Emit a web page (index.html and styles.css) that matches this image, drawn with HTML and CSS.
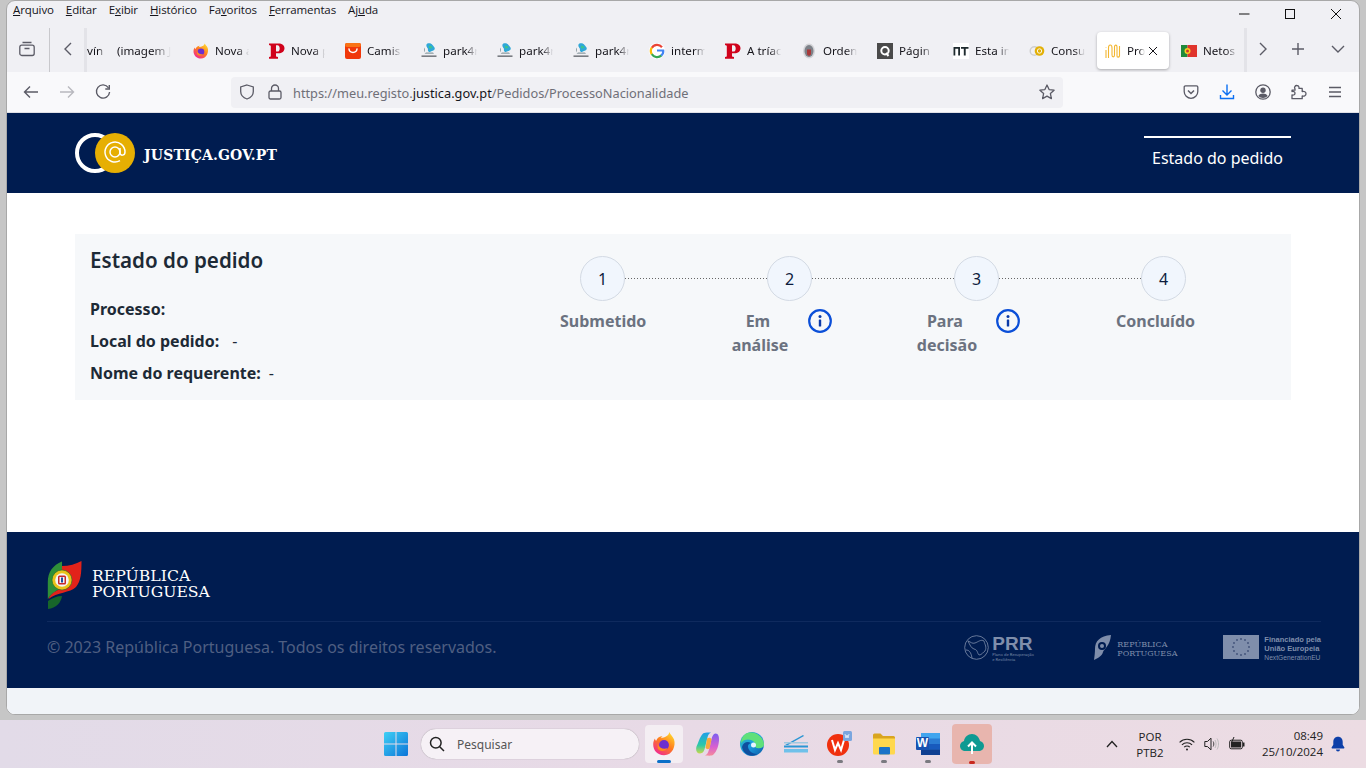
FILE: index.html
```html
<!DOCTYPE html>
<html lang="pt">
<head>
<meta charset="utf-8">
<title>Estado do pedido</title>
<link rel="stylesheet" href="styles.css">
</head>
<body>
<svg class="defs" width="0" height="0" aria-hidden="true">
  <defs>
    <symbol id="i-park" viewBox="0 0 16 16">
      <path d="M6 .8c2-1 4.500-.4 5.500 1.200 1 1.500 3 2.500 2 4.500-.8 1.500-2.500 1-3.500 2-1 .8-2.500.5-3-.8-.4-1 .4-1.700-.6-2.700C5.400 3.800 4.800 1.800 6 .8z" fill="#2fa8d8"/>
      <path d="M8 2.800c1.500-.5 3 .5 3.500 1.500-.8 1.200-2.500 1.500-3.500.7z" fill="#3cc48c"/>
      <path d="M4 4.500c-1.500 1.500-1 3.500 0 5M5 9.500h7l1 1.200H3.500z" fill="#8a9aa0"/>
      <rect x=".5" y="12.500" width="15" height="1.300" fill="#5c6066"/>
    </symbol>
    <symbol id="i-p" viewBox="0 0 16 16">
      <path d="M0 .5h9.500C13 .5 15.500 2.200 15.500 5.200S13 10.200 9.500 10.200H7v3.300l2 .6v1.600H0v-1.600l1.800-.6V2.700L0 2.100zM7 2.200v6.300h1.500c1.400 0 2.200-1.200 2.200-3.100s-.8-3.200-2.200-3.200z" fill="#d0021b"/>
    </symbol>
    <symbol id="i-info" viewBox="0 0 24 24">
      <circle cx="12" cy="12" r="10.800" fill="none" stroke="#0b4fd8" stroke-width="2.200"/>
      <circle cx="12" cy="7.600" r="1.500" fill="#0b3aa8"/>
      <rect x="10.800" y="10.500" width="2.400" height="7" rx=".6" fill="#0b3aa8"/>
    </symbol>
  </defs>
</svg>

<div class="window">
  <div class="menubar">
    <nav class="menu">
      <span class="menu-item"><u>A</u>rquivo</span>
      <span class="menu-item"><u>E</u>ditar</span>
      <span class="menu-item">E<u>x</u>ibir</span>
      <span class="menu-item"><u>H</u>istórico</span>
      <span class="menu-item">Fa<u>v</u>oritos</span>
      <span class="menu-item"><u>F</u>erramentas</span>
      <span class="menu-item">Aj<u>u</u>da</span>
    </nav>
    <div class="winctl">
      <svg width="12" height="12" viewBox="0 0 12 12"><path d="M1 6h10.500" stroke="#111" stroke-width="1"/></svg>
      <svg width="12" height="12" viewBox="0 0 12 12"><rect x="1.500" y="1.500" width="9" height="9" fill="none" stroke="#111"/></svg>
      <svg width="12" height="12" viewBox="0 0 12 12"><path d="M1 1l10 10M11 1L1 11" stroke="#111" stroke-width="1"/></svg>
    </div>
  </div>

  <div class="tabbar">
    <button class="tool tool-view" aria-label="Abas">
      <svg width="16" height="16" viewBox="0 0 16 16" fill="none" stroke="#5b5b66" stroke-width="1.300"><path d="M3.500 1.500h9"/><rect x=".8" y="4.200" width="14.400" height="10.300" rx="2"/><path d="M5.500 7.500h5"/></svg>
    </button>
    <div class="sep"></div>
    <button class="tool tool-left" aria-label="Anterior">
      <svg width="12" height="14" viewBox="0 0 12 14" fill="none" stroke="#5b5b66" stroke-width="1.400"><path d="M9 1L3 7l6 6"/></svg>
    </button>
    <div class="tabs">
      <div class="tab tab-cut"><span class="tab-text">vín</span></div>
      <div class="tab"><span class="tab-text">(imagem J</span></div>
      <div class="tab">
        <svg class="fav" viewBox="0 0 16 16">
          <defs><linearGradient id="ff" x1="0.800" y1="0.100" x2="0.200" y2="1"><stop offset="0" stop-color="#ffcc2a"/><stop offset=".45" stop-color="#ff7a1f"/><stop offset="1" stop-color="#f0219b"/></linearGradient></defs>
          <path d="M11.500.5c.5 1 2.500 2.500 3.200 4.500C16 8.800 13.800 15.500 8 15.500 3.500 15.500.5 12.300.5 8.200c0-1.600.6-3 1.200-3.800 0 .8.400 1.300.8 1.500C3.500 3.500 5.500 2.700 7 2.800c-.5.400-.9.800-1 1.300 2.200-.5 5.500-1 5.500-3.600z" fill="url(#ff)"/>
          <circle cx="8" cy="8.700" r="3.300" fill="#6b2fd0"/>
          <path d="M4 8c1 2.800 4 4 6.300 2.700-1.300 2.400-5 2.600-6.300.3z" fill="#ff8a1f"/>
        </svg>
        <span class="tab-text">Nova a</span>
      </div>
      <div class="tab"><svg class="fav"><use href="#i-p"/></svg><span class="tab-text">Nova p</span></div>
      <div class="tab">
        <svg class="fav" viewBox="0 0 16 16"><rect width="16" height="16" rx="2" fill="#f0380b"/><rect y="0" width="16" height="4" rx="2" fill="#f97316"/><path d="M4 6c.5 4.500 7.500 4.500 8 0" fill="none" stroke="#fff" stroke-width="1.500" stroke-linecap="round"/></svg>
        <span class="tab-text">Camis</span>
      </div>
      <div class="tab"><svg class="fav"><use href="#i-park"/></svg><span class="tab-text">park4r</span></div>
      <div class="tab"><svg class="fav"><use href="#i-park"/></svg><span class="tab-text">park4r</span></div>
      <div class="tab"><svg class="fav"><use href="#i-park"/></svg><span class="tab-text">park4r</span></div>
      <div class="tab">
        <svg class="fav" viewBox="0 0 16 16"><circle cx="8" cy="8" r="8" fill="#fff"/><g fill="none" stroke-width="2.200"><path d="M13 4.200A6.300 6.300 0 0 0 2.800 4.800" stroke="#ea4335"/><path d="M2.800 4.700a6.300 6.300 0 0 0 0 6.600" stroke="#fbbc05"/><path d="M2.800 11.200a6.300 6.300 0 0 0 9.700 1.200" stroke="#34a853"/><path d="M12.200 12.700c1.500-1.300 2.300-3 2-5.200H8" stroke="#4285f4"/></g></svg>
        <span class="tab-text">interm</span>
      </div>
      <div class="tab"><svg class="fav"><use href="#i-p"/></svg><span class="tab-text">A tríac</span></div>
      <div class="tab">
        <svg class="fav" viewBox="0 0 16 16"><ellipse cx="8" cy="8" rx="6" ry="7.500" fill="#d4d4d8"/><ellipse cx="8" cy="8" rx="4.500" ry="6" fill="#7d8188"/><path d="M6 6.500h4v5L8 13l-2-1.500z" fill="#a8393a"/></svg>
        <span class="tab-text">Orden</span>
      </div>
      <div class="tab">
        <svg class="fav" viewBox="0 0 16 16"><rect width="16" height="16" fill="#4a4a4a"/><circle cx="8" cy="7.700" r="3.700" fill="none" stroke="#fff" stroke-width="2"/><path d="M9 10l2.500 3" stroke="#fff" stroke-width="2"/></svg>
        <span class="tab-text">Págin</span>
      </div>
      <div class="tab">
        <svg class="fav" viewBox="0 0 16 16"><rect width="16" height="16" fill="#fff"/><path d="M.5 4h6.500v8.500H5.200V5.700H2.300v6.800H.5zM8 4h7.500v1.700h-2.800v6.800h-1.900V5.700H8z" fill="#1e2a2e"/></svg>
        <span class="tab-text">Esta in</span>
      </div>
      <div class="tab">
        <svg class="fav" viewBox="0 0 16 16"><circle cx="5.500" cy="8" r="4.300" fill="none" stroke="#cfcfcf" stroke-width="1.400"/><circle cx="10.500" cy="8" r="4.800" fill="#e2b007"/><circle cx="10.500" cy="8" r="2.200" fill="none" stroke="#fff" stroke-width=".9"/></svg>
        <span class="tab-text">Consu</span>
      </div>
      <div class="tab tab-active">
        <svg class="fav" viewBox="0 0 16 16" fill="none" stroke="#f2b632" stroke-width="1.100"><path d="M1 15V7M1 4.500v-.6M3.500 15V5c0-4 3.500-4 3.500 0v7c0 2.500 2.500 2.500 2.500 0V4c0-2.500 2.500-2.500 2.500 0v9c0 1.500 2 1.500 2.500 0V3"/></svg>
        <span class="tab-text tab-text-short">Pro</span>
        <svg class="tab-close" width="12" height="12" viewBox="0 0 12 12"><path d="M2 2l8 8M10 2l-8 8" stroke="#15141a" stroke-width="1"/></svg>
      </div>
      <div class="tab">
        <svg class="fav" viewBox="0 0 16 16"><rect y="2" width="6.500" height="12" fill="#1f8a3b"/><rect x="6.500" y="2" width="9.500" height="12" fill="#e0342c"/><circle cx="6.500" cy="8" r="3" fill="#f5d020"/><circle cx="6.500" cy="8" r="1.500" fill="#c8372d"/></svg>
        <span class="tab-text">Netos</span>
      </div>
    </div>
    <div class="tab-end">
      <div class="sep-soft"></div>
      <svg class="t-right" width="12" height="14" viewBox="0 0 12 14" fill="none" stroke="#5b5b66" stroke-width="1.400"><path d="M3 1l6 6-6 6"/></svg>
      <svg class="t-plus" width="14" height="14" viewBox="0 0 14 14" stroke="#5b5b66" stroke-width="1.400"><path d="M7 1v12M1 7h12"/></svg>
      <svg class="t-down" width="14" height="10" viewBox="0 0 14 10" fill="none" stroke="#5b5b66" stroke-width="1.400"><path d="M1 2l6 6 6-6"/></svg>
    </div>
  </div>

  <div class="navbar">
    <div class="nav-left">
      <svg width="16" height="16" viewBox="0 0 16 16" fill="none" stroke="#5b5b66" stroke-width="1.400"><path d="M15 8H1.500M7 2.500L1.500 8 7 13.500"/></svg>
      <svg width="16" height="16" viewBox="0 0 16 16" fill="none" stroke="#b8b8be" stroke-width="1.400"><path d="M1 8h13.500M9 2.500L14.500 8 9 13.500"/></svg>
      <svg width="16" height="16" viewBox="0 0 16 16" fill="none" stroke="#5b5b66" stroke-width="1.400"><path d="M13.500 3.800A6.600 6.600 0 1 0 14.600 8"/><path d="M14.300 1v4h-4" /></svg>
    </div>
    <div class="urlbar">
      <svg class="u-shield" width="16" height="16" viewBox="0 0 16 16" fill="none" stroke="#5b5b66" stroke-width="1.300"><path d="M8 1l6.300 2v4.500c0 3.800-3 6.400-6.300 7.500C4.700 13.900 1.700 11.300 1.700 7.500V3z"/></svg>
      <svg class="u-lock" width="14" height="16" viewBox="0 0 14 16" fill="none" stroke="#5b5b66" stroke-width="1.300"><rect x="1" y="7" width="12" height="8" rx="1.500"/><path d="M3.500 7V4.500a3.500 3.500 0 0 1 7 0V7"/></svg>
      <span class="url"><span class="url-dim">https://meu.registo.</span>justica.gov.pt<span class="url-dim">/Pedidos/ProcessoNacionalidade</span></span>
      <svg class="u-star" width="16" height="16" viewBox="0 0 16 16" fill="none" stroke="#5b5b66" stroke-width="1.300"><path d="M8 1l2.100 4.600 5 .6-3.700 3.400 1 5L8 12.100l-4.400 2.500 1-5L.9 6.200l5-.6z" stroke-linejoin="round"/></svg>
    </div>
    <div class="nav-right">
      <svg width="16" height="16" viewBox="0 0 16 16" fill="none" stroke="#5b5b66" stroke-width="1.300"><path d="M2.500 1.800h11c.8 0 1.300.6 1.300 1.300v4.400a6.800 6.800 0 0 1-13.600 0V3.100c0-.7.500-1.300 1.300-1.300z"/><path d="M5 6.500l3 3 3-3" stroke-width="1.500"/></svg>
      <svg width="16" height="16" viewBox="0 0 16 16" fill="none" stroke="#0b6ff2" stroke-width="1.400"><path d="M8 .5v10M3.500 6.500L8 11l4.500-4.500M1.500 11v3.500h13V11"/></svg>
      <svg width="16" height="16" viewBox="0 0 16 16"><circle cx="8" cy="8" r="7.200" fill="none" stroke="#5b5b66" stroke-width="1.300"/><circle cx="8" cy="6.300" r="2.700" fill="#5b5b66"/><path d="M3.300 12c1-2 3-2.600 4.700-2.600s3.700.6 4.700 2.600c-1.200 1.300-3 2-4.700 2s-3.500-.7-4.700-2z" fill="#5b5b66"/></svg>
      <svg width="16" height="16" viewBox="0 0 16 16" fill="none" stroke="#5b5b66" stroke-width="1.300"><path d="M1 6.500h3V5.300a2.200 2.200 0 0 1 2-3.500 2.100 2.100 0 0 1 2 2.200v.7h3.200v3.200c2-.8 3.800.5 3.800 2.100s-1.800 3-3.800 2.200V15H1v-3.700c1.800.5 3-.5 3-1.800S2.800 7.500 1 7.800z" stroke-linejoin="round" transform="translate(0 -.3)"/></svg>
      <svg width="16" height="16" viewBox="0 0 16 16" stroke="#5b5b66" stroke-width="1.300"><path d="M2 3.500h12M2 8h12M2 12.500h12"/></svg>
    </div>
  </div>

  <div class="page">
    <header class="site-head">
      <div class="brand">
        <svg class="brand-mark" width="60" height="40" viewBox="0 0 60 40">
          <circle cx="20" cy="20" r="18" fill="none" stroke="#fff" stroke-width="4"/>
          <circle cx="40" cy="20" r="20" fill="#e6af03"/>
          <circle cx="40" cy="19" r="5" fill="none" stroke="#fff" stroke-width="1.500"/>
          <path d="M45 15v5c0 3 5 3 5-1a10 10 0 1 0-5 8.700" fill="none" stroke="#fff" stroke-width="1.500"/>
        </svg>
        <span class="brand-name">JUSTIÇA.GOV.PT</span>
      </div>
      <a class="head-link">Estado do pedido</a>
    </header>

    <main class="main">
      <section class="card">
        <div class="info">
          <h1 class="info-title">Estado do pedido</h1>
          <p class="info-row"><b>Processo:</b></p>
          <p class="info-row"><b>Local do pedido:</b><span class="val val-wide">-</span></p>
          <p class="info-row"><b>Nome do requerente:</b><span class="val">-</span></p>
        </div>
        <div class="steps">
          <div class="step-track">
            <span class="dot">1</span><span class="line"></span>
            <span class="dot">2</span><span class="line"></span>
            <span class="dot">3</span><span class="line"></span>
            <span class="dot">4</span>
          </div>
          <div class="step-labels">
            <div class="lab lab-1"><span class="lab-text">Submetido</span></div>
            <div class="lab lab-2"><span class="lab-text lab-narrow">Em&nbsp; análise</span><svg class="info-ic"><use href="#i-info"/></svg></div>
            <div class="lab lab-3"><span class="lab-text lab-narrow">Para&nbsp; decisão</span><svg class="info-ic"><use href="#i-info"/></svg></div>
            <div class="lab lab-4"><span class="lab-text">Concluído</span></div>
          </div>
        </div>
      </section>
    </main>

    <footer class="site-foot">
      <div class="foot-brand">
        <svg width="36" height="50" viewBox="0 0 36 50">
          <path d="M15 1.500C6 5 .8 12 .8 22v17C4 34 10 30 15 28z" fill="#2f8f38"/>
          <path d="M15 6c7 0 14-2 19.500-5 0 11-.5 20-5.500 26-6 6-19 5-27.500 12 3-8 12-9 13.500-12z" fill="#e2231a"/>
          <path d="M1 49V41c4-3 9-5 14-5-1 7-6 12-14 13z" fill="#17652a"/>
          <circle cx="15" cy="20" r="10" fill="#e9c21a" stroke="#1f6e2c" stroke-width=".6"/>
          <circle cx="15" cy="20" r="6.800" fill="#f4f4f4"/>
          <rect x="11" y="15.500" width="8" height="9" rx="1.500" fill="#c8262a"/>
          <rect x="12.500" y="17" width="5" height="6" fill="#f4f4f4"/>
          <rect x="14" y="17.500" width="2" height="5" fill="#1d4fa3"/>
        </svg>
        <span class="foot-name">REPÚBLICA<br>PORTUGUESA</span>
      </div>
      <div class="foot-bottom">
        <span class="copy">© 2023 República Portuguesa. Todos os direitos reservados.</span>
        <div class="partners">
          <div class="prr">
            <svg width="25" height="25" viewBox="0 0 25 25" fill="none" stroke="#7f8eab" stroke-width=".8"><circle cx="12.500" cy="12.500" r="11.800"/><path d="M4 6c3 1 4 3 7 2s6-4 9-2c1 4 3 6 1 10-2 1-3 4-6 4-2-2-1-5-5-6-3-1-4-4-6-8zM2 15c3 0 5 2 6 8"/></svg>
            <div class="prr-text"><b>PRR</b><small>Plano de Recuperação<br>e Resiliência</small></div>
          </div>
          <div class="rp">
            <svg width="18" height="25" viewBox="0 0 18 25"><path d="M17 0C6 1 1 6 1 14c0 4-.5 7-1 11 4-2 8-4 9-8 1-3 7-6 8-17z" fill="#7f8eab"/><circle cx="8" cy="11" r="4" fill="#001c50"/><circle cx="8" cy="11" r="2" fill="#7f8eab"/></svg>
            <span class="rp-text">REPÚBLICA<br>PORTUGUESA</span>
          </div>
          <div class="eu">
            <div class="eu-flag">
              <svg width="36" height="24" viewBox="0 0 36 24" fill="#3e5078">
                <circle cx="18" cy="4" r=".9"/><circle cx="22" cy="5" r=".9"/><circle cx="25" cy="8" r=".9"/><circle cx="26" cy="12" r=".9"/><circle cx="25" cy="16" r=".9"/><circle cx="22" cy="19" r=".9"/><circle cx="18" cy="20" r=".9"/><circle cx="14" cy="19" r=".9"/><circle cx="11" cy="16" r=".9"/><circle cx="10" cy="12" r=".9"/><circle cx="11" cy="8" r=".9"/><circle cx="14" cy="5" r=".9"/>
              </svg>
            </div>
            <span class="eu-text"><b>Financiado pela<br>União Europeia</b><br><small>NextGenerationEU</small></span>
          </div>
        </div>
      </div>
    </footer>
    <div class="page-end"></div>
  </div>
</div>

<div class="taskbar">
  <svg class="tb-start" width="24" height="24" viewBox="0 0 24 24">
    <defs><linearGradient id="win" x1="0" y1="0" x2="1" y2="1"><stop offset="0" stop-color="#3fd0f5"/><stop offset="1" stop-color="#0b74d8"/></linearGradient></defs>
    <path d="M0 1.500A1.500 1.500 0 0 1 1.500 0H11.500V11.500H0zM12.500 0H22.500A1.500 1.500 0 0 1 24 1.500V11.500H12.500zM0 12.500H11.500V24H1.500A1.500 1.500 0 0 1 0 22.500zM12.500 12.500H24V22.500A1.500 1.500 0 0 1 22.500 24H12.500z" fill="url(#win)"/>
  </svg>
  <div class="tb-search">
    <svg width="16" height="16" viewBox="0 0 16 16" fill="none" stroke="#222" stroke-width="1.500"><circle cx="6.800" cy="6.800" r="5.300"/><path d="M10.700 10.700L15 15"/></svg>
    <span>Pesquisar</span>
  </div>
  <div class="tb-apps">
    <div class="tb-app tb-app-on">
      <svg width="24" height="26" viewBox="0 0 16 17">
        <path d="M11.500.5c.5 1.500 2.500 3 3.200 5C16 9.500 13.800 16 8 16 3.500 16 .8 12.800.8 8.700c0-1.600.6-3 1.200-3.800 0 .8.400 1.300.8 1.500C3.500 4 5.500 3.200 7 3.300c-.5.400-.9.800-1 1.300 2.200-.5 5.500-1.500 5.500-4.100z" fill="url(#ff)"/>
        <circle cx="8" cy="9.200" r="3.300" fill="#6b2fd0"/>
        <path d="M3.800 8.500c1 2.800 4.200 4 6.500 2.700-1.300 2.400-5.200 2.600-6.500.3z" fill="#ff8a1f"/>
      </svg>
      <i class="pin pin-on"></i>
    </div>
    <div class="tb-app">
      <svg width="24" height="24" viewBox="0 0 24 24">
        <defs>
          <linearGradient id="cp1" x1="0" y1="0" x2="0" y2="1"><stop offset="0" stop-color="#1f9fe8"/><stop offset=".6" stop-color="#2cc8a8"/><stop offset="1" stop-color="#c6d94a"/></linearGradient>
          <linearGradient id="cp2" x1="0" y1="0" x2="0" y2="1"><stop offset="0" stop-color="#7b5ff0"/><stop offset=".6" stop-color="#d85fd0"/><stop offset="1" stop-color="#f58a9a"/></linearGradient>
        </defs>
        <path d="M7 1.500c1.500-1.200 5-1 8-1-2.500 1-3 3-3.800 6l-2.200 9c-.6 3-2 6-5 6-3.500 0-4.500-3.500-3.500-7C2 12 3.500 5 7 1.500z" fill="url(#cp1)"/>
        <path d="M17 23c-1.500 1-5 .5-8 .5 2.500-1 3.200-3 4-6l2.200-9c.6-3 1.800-7 4.300-7 3 0 3.800 3.500 3.500 7-.3 4.500-2 11-6 14.500z" fill="url(#cp2)"/>
        <path d="M11 6.500c2-1 4-1 4.500 1l-1.800 8.500c-.6 1.500-3.200 1.500-4.200 0z" fill="#f7a93b"/>
      </svg>
    </div>
    <div class="tb-app">
      <svg width="24" height="24" viewBox="0 0 24 24">
        <defs><linearGradient id="edge" x1="0" y1="0" x2="1" y2="1"><stop offset="0" stop-color="#35c1b1"/><stop offset=".5" stop-color="#1b9de2"/><stop offset="1" stop-color="#0c59a4"/></linearGradient></defs>
        <circle cx="12" cy="12" r="12" fill="url(#edge)"/>
        <path d="M6 1.500C13 -2 23 3 24 12c.2 3-3 5-7 4 -3-.8-1-3-2.500-5.500C12 7 4.500 6 1 11c.2-4 2-7.500 5-9.500z" fill="#5fe07a"/>
        <path d="M8 14c0 4 3.500 8 9 8-6 4-14 0-15-7 1-5 6-6 9-4-1.500.5-3 1.500-3 3z" fill="#0f4f9e"/>
        <circle cx="13.500" cy="13" r="2.500" fill="#e8f4ff"/>
      </svg>
    </div>
    <div class="tb-app">
      <svg width="24" height="18" viewBox="0 0 24 18">
        <path d="M1 10L19 0l1 1L4 10z" fill="#2b96d4"/>
        <rect y="10.500" width="24" height="2" fill="#2b96d4"/>
        <rect y="14" width="24" height="3.500" fill="#6fc1ea"/>
        <rect y="7" width="24" height="1.500" fill="#9fc8df"/>
      </svg>
    </div>
    <div class="tb-app">
      <svg width="26" height="26" viewBox="0 0 26 26">
        <circle cx="11" cy="14" r="11" fill="#f0300e"/>
        <path d="M5 9l3 10 3-7 3 7 3-10" fill="none" stroke="#fff" stroke-width="2"/>
        <rect x="16" y="0" width="9" height="10" rx="1.500" fill="#7aa6df"/>
        <path d="M18 3l1 4 1-3 1 3 1-4" fill="none" stroke="#fff" stroke-width=".7"/>
      </svg>
      <i class="pin"></i>
    </div>
    <div class="tb-app">
      <svg width="24" height="24" viewBox="0 0 24 24">
        <path d="M1 3a1.500 1.500 0 0 1 1.500-1.500h6L11 4h10.500A1.500 1.500 0 0 1 23 5.500V8H1z" fill="#d9a520"/>
        <path d="M1 6.500h22V21a1.500 1.500 0 0 1-1.500 1.500h-19A1.500 1.500 0 0 1 1 21z" fill="#ffd84d"/>
        <rect x="7" y="15" width="11" height="7.500" rx="1" fill="#1a73c8"/>
      </svg>
      <i class="pin"></i>
    </div>
    <div class="tb-app">
      <svg width="24" height="24" viewBox="0 0 24 24">
        <rect x="5" y="1" width="19" height="22" rx="1.500" fill="#2b7cd3"/>
        <rect x="5" y="1" width="19" height="5.500" fill="#41a5ee"/>
        <rect x="5" y="12" width="19" height="5.500" fill="#185abd"/>
        <rect x="5" y="17.500" width="19" height="5.500" fill="#103f91"/>
        <rect y="5" width="13" height="13" rx="1" fill="#1852b0"/>
        <text class="word-w" x="6.500" y="15" text-anchor="middle">W</text>
      </svg>
      <i class="pin"></i>
    </div>
    <div class="tb-app tb-app-alert">
      <svg width="24" height="20" viewBox="0 0 24 20">
        <path d="M6 17h-.5C2.500 17 0 15 0 12c0-2.500 1.800-4.500 4-5 .5-4 4-7 8-7s7 3 8 7c2.300.5 4 2.500 4 5 0 3-2.500 5-5.500 5z" fill="#0f9a92"/>
        <path d="M12 20V9M8 12.500L12 8.500l4 4" fill="none" stroke="#fff" stroke-width="2"/>
      </svg>
      <i class="pin pin-red"></i>
    </div>
  </div>
  <div class="tray">
    <svg class="tr-chev" width="12" height="8" viewBox="0 0 12 8" fill="none" stroke="#222" stroke-width="1.300"><path d="M1 7l5-5.500L11 7"/></svg>
    <div class="tr-lang">POR<br>PTB2</div>
    <svg class="tr-wifi" width="16" height="13" viewBox="0 0 16 13" fill="none" stroke="#222" stroke-width="1.100"><path d="M.6 4.300a10.500 10.500 0 0 1 14.800 0M2.900 6.800a7.300 7.300 0 0 1 10.200 0M5.200 9.200a4 4 0 0 1 5.600 0"/><circle cx="8" cy="11.500" r="1" fill="#222" stroke="none"/></svg>
    <svg class="tr-vol" width="16" height="14" viewBox="0 0 16 14" fill="none" stroke="#222" stroke-width="1"><path d="M.8 4.500h2.600L7 1.200v11.600L3.400 9.500H.8z"/><path d="M9.200 4.500c.8 1.500.8 3.500 0 5" stroke="#444"/><path d="M11 3c1.400 2.300 1.400 5.700 0 8M13 1.500c2 3.200 2 7.800 0 11" stroke="#bbb"/></svg>
    <svg class="tr-bat" width="16" height="14" viewBox="0 0 16 14"><rect x=".7" y="3.200" width="12.600" height="8.600" rx="1.500" fill="none" stroke="#222"/><rect x="2" y="4.500" width="10" height="6" fill="#222"/><rect x="14" y="5.500" width="1.500" height="4" fill="#222"/><path d="M5 0L2.500 5.500h3L4 10" fill="none" stroke="#222"/></svg>
    <div class="tr-clock">08:49<br>25/10/2024</div>
    <svg class="tr-bell" width="14" height="16" viewBox="0 0 14 16"><path d="M7 .8c-3 0-4.700 2.200-4.700 5v3L.6 11.500c-.2.400 0 .9.500.9h11.800c.5 0 .7-.5.500-.9L11.700 8.800v-3C11.700 3 10 .8 7 .8zM5 13.500a2 2 0 0 0 4 0z" fill="#0d3fa8"/></svg>
  </div>
</div>
</body>
</html>
```

FILE: styles.css
```css
* { box-sizing: border-box; }
html, body { margin: 0; padding: 0; height: 768px; overflow: hidden; }
body {
  background: #c6c6c6;
  font-family: "Noto Sans", "Open Sans", sans-serif;
  display: flex;
  flex-direction: column;
  color: #15141a;
}
.defs { position: absolute; }
svg { display: block; flex: none; }

.window {
  width: 1354px;
  height: 715px;
  margin: 0 0 0 6px;
  border: 1px solid #a8a8a8;
  border-radius: 9px;
  background: #f0f0f4;
  overflow: hidden;
  flex: none;
  display: flex;
  flex-direction: column;
}

/* menu bar */
.menubar { height: 27px; flex: none; display: flex; align-items: flex-start; justify-content: space-between; }
.menu { display: flex; padding: 1px 0 0 6px; font-family: "Open Sans", sans-serif; font-size: 11.500px; line-height: 16px; color: #15141a; }
.menu-item { margin-right: 12px; letter-spacing: -.01em; }
.winctl { display: flex; gap: 34px; padding: 7px 17px 0 0; }

/* tab bar */
.tabbar { height: 44px; flex: none; display: flex; align-items: stretch; position: relative; }
.tool { border: 0; background: none; padding: 0; display: flex; align-items: center; }
.tool-view { width: 42px; padding-left: 12px; padding-bottom: 2px; }
.sep { width: 1px; background: #c8c8cc; height: 44px; }
.tool-left { width: 34px; padding-left: 12px; padding-bottom: 2px; }
.tabs { display: flex; flex: 1; min-width: 0; height: 44px; border-left: 3px solid #e3e3e8; overflow: hidden; font-size: 12px; }
.tab { width: 76px; flex: none; height: 37px; margin-top: 4px; padding: 0 6px 0 10px; display: flex; align-items: center; gap: 6px; }
.tab-cut { width: 20px; padding: 0; }
.fav { width: 16px; height: 16px; }
.tab-text { flex: 1; min-width: 0; overflow: hidden; white-space: nowrap; font-size: 11.600px; line-height: 16px; -webkit-mask-image: linear-gradient(90deg, #000 60%, transparent 90%); mask-image: linear-gradient(90deg, #000 60%, transparent 90%); }
.tab-active { width: 72px; margin: 4px 2px 0; padding: 0 8px; background: #fff; border-radius: 4px; box-shadow: 0 1px 3px rgba(0,0,0,.3); gap: 6px; }
.tab-text-short { flex: 0 0 20px; }
.tab-close { margin-left: -6px; }
.tab-end { width: 115px; flex: none; display: flex; align-items: center; padding-bottom: 2px; position: relative; }
.sep-soft { width: 3px; height: 44px; background: #e3e3e8; margin-top: 2px; }
.t-right { margin-left: 10px; }
.t-plus { margin-left: 22px; }
.t-down { margin-left: 26px; }

/* nav bar */
.navbar { height: 41px; flex: none; background: #f9f9fb; border-bottom: 1px solid #e0e0e6; display: flex; align-items: center; }
.nav-left { display: flex; gap: 20px; width: 224px; padding-left: 16px; }
.urlbar { width: 832px; height: 31px; background: #f0f0f4; border-radius: 4px; display: flex; align-items: center; padding: 0 8px; }
.u-lock { margin-left: 13px; }
.url { margin-left: 11px; padding-top: 1px; font-size: 12.770px; flex: 1; white-space: nowrap; color: #15141a; }
.url-dim { color: #6f6f78; }
.nav-right { display: flex; gap: 20px; margin-left: 120px; }

/* page */
.page { flex: 1; min-height: 0; display: flex; flex-direction: column; background: #fff; }
.site-head { height: 80px; flex: none; background: #001c50; padding: 0 68px; display: flex; justify-content: space-between; }
.brand { display: flex; align-items: center; gap: 9px; }
.brand-name { font-family: "DejaVu Serif", serif; font-weight: 700; font-size: 14px; color: #fff; letter-spacing: .15px; padding-top: 3px; }
.head-link { margin-top: 23px; width: 147px; height: 44px; border-top: 2px solid #fff; font-size: 16px; line-height: 40px; color: #fff; text-align: center; }

.main { height: 339px; flex: none; padding: 41px 68px 0; }
.card { height: 166px; background: #f6f8fa; display: flex; }
.info { width: 435px; flex: none; padding: 11px 0 0 15px; color: #1d2a36; }
.info-title { margin: 0 0 22px; font-size: 20.600px; line-height: 30px; font-weight: 600; color: #1d2a36; }
.info-row { margin: 0 0 8px; font-size: 16px; line-height: 24px; }
.info-row b { font-weight: 700; }
.val { margin-left: 8px; }
.val-wide { margin-left: 13px; }

.steps { padding-top: 22px; }
.step-track { display: flex; align-items: center; width: 606px; margin-left: 70px; }
.dot { width: 45px; height: 45px; flex: none; border: 1px solid #d3dae4; border-radius: 50%; background: #f1f6fd; display: flex; align-items: center; justify-content: center; font-size: 16px; color: #0d1c3d; }
.line { flex: 1; height: 1px; background: repeating-linear-gradient(90deg, #666 0 1px, transparent 1px 3px); }
.step-labels { display: grid; grid-template-columns: repeat(4, 187px); margin-top: 8px; }
.lab { display: flex; align-items: flex-start; }
.lab-text { font-size: 16px; line-height: 24px; font-weight: 700; color: #6b7280; text-align: center; }
.lab-narrow { width: 66px; }
.lab-1 { padding-left: 50px; }
.lab-2 { padding-left: 30px; }
.lab-3 { padding-left: 30px; }
.lab-4 { padding-left: 45px; }
.info-ic { width: 24px; height: 24px; margin-left: 15px; }
.lab-3 .info-ic { margin-left: 16px; }

.site-foot { height: 156px; flex: none; background: #001c50; padding: 28px 38px 0 40px; display: flex; flex-direction: column; }
.foot-brand { height: 61px; flex: none; display: flex; align-items: flex-start; gap: 9px; }
.foot-name { font-family: "DejaVu Serif", serif; font-size: 15.700px; line-height: 16px; color: #fff; padding-top: 8px; }
.foot-bottom { border-top: 1px solid #0f2a5e; display: flex; justify-content: space-between; padding-top: 13px; }
.copy { font-size: 16px; line-height: 24px; color: #4f5f82; }
.partners { display: flex; align-items: flex-start; color: #7f8eab; }
.prr { display: flex; gap: 3px; width: 130px; }
.prr-text { display: flex; flex-direction: column; }
.prr-text b { font-family: "Liberation Sans", sans-serif; font-size: 19px; line-height: 17px; }
.prr-text small { font-size: 4px; line-height: 5px; }
.rp { display: flex; gap: 5px; width: 129px; }
.rp-text { font-family: "DejaVu Serif", serif; font-size: 8px; line-height: 9px; padding-top: 5px; }
.eu { display: flex; gap: 5px; }
.eu-flag { width: 36px; height: 24px; background: #7f8eab; }
.eu-text { font-family: "Liberation Sans", sans-serif; font-size: 7.500px; line-height: 9px; white-space: nowrap; }
.eu-text small { font-size: 6.700px; }
.page-end { flex: 1; background: #f1f4f8; }

/* taskbar */
.taskbar { margin-top: 5px; height: 48px; flex: none; background: linear-gradient(90deg, #e2dbe8, #e8dae6 50%, #ecdce3); display: flex; align-items: center; padding-left: 384px; position: relative; }
.tb-search { width: 218px; height: 30px; margin-left: 13px; border-radius: 15px; background: #f6f1f6; box-shadow: 0 0 1px rgba(0,0,0,.4); display: flex; align-items: center; gap: 12px; padding-left: 8px; font-size: 12px; color: #555; }
.tb-apps { display: flex; margin-left: 6px; align-items: center; }
.tb-app { width: 44px; height: 38px; display: flex; align-items: center; justify-content: center; position: relative; }
.tb-app-on { width: 38px; background: #f4eef3; border-radius: 4px; margin-right: 3px; }
.tb-app-alert { width: 40px; height: 40px; background: #e8b5ae; border-radius: 4px; margin-left: 2px; }
.pin { position: absolute; left: 50%; bottom: 0; width: 6px; height: 3px; margin-left: -3px; border-radius: 2px; background: #7a7a80; }
.pin-on { width: 14px; margin-left: -7px; background: #0b6fc8; }
.pin-red { background: #c8281e; }
.word-w { font-family: "Liberation Sans", sans-serif; font-size: 12px; font-weight: 700; fill: #fff; }
.tray { position: absolute; left: 1106px; top: 0; width: 260px; height: 48px; display: flex; align-items: center; font-family: "Open Sans", sans-serif; font-size: 11.500px; color: #222; }
.tr-lang { width: 32px; margin-left: 16px; text-align: center; line-height: 16px; padding-top: 1px; }
.tr-wifi { margin-left: 13px; }
.tr-vol { margin-left: 9px; }
.tr-bat { margin-left: 9px; }
.tr-clock { margin-left: 7px; width: 71px; text-align: right; line-height: 16px; }
.tr-bell { margin-left: 8px; }
```
